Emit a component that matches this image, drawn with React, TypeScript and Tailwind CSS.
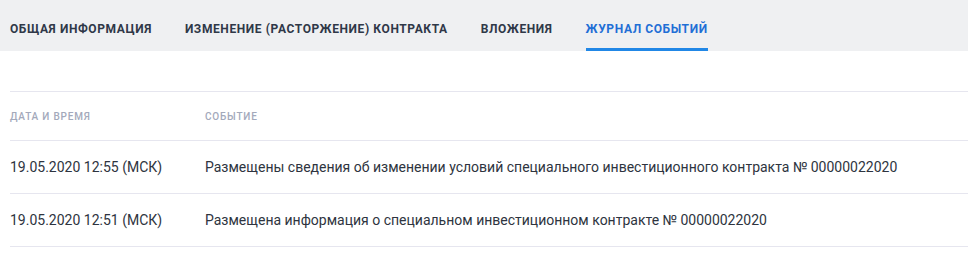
import React from "react"

const tabs = ["Общая информация", "Изменение (расторжение) контракта", "Вложения", "Журнал событий"]

const events = [
  {
    date: "19.05.2020 12:55 (МСК)",
    text: "Размещены сведения об изменении условий специального инвестиционного контракта № 00000022020",
  },
  {
    date: "19.05.2020 12:51 (МСК)",
    text: "Размещена информация о специальном инвестиционном контракте № 00000022020",
  },
]

const App: React.FC = () => {
  const active = 3

  return (
    <div className="min-h-screen bg-white" style={{ fontFamily: "Roboto, 'Noto Sans', sans-serif" }}>
      <div className="flex h-[51px] items-end gap-[33px] bg-[#eff0f2] px-[10px]">
        {tabs.map((tab, i) => (
          <div
            key={tab}
            className={
              i === active
                ? "flex h-[51px] items-center border-b-[3px] border-[#2187e6] pt-[10px] text-[12px] font-bold uppercase tracking-[0.6px] text-[#1f6fd6]"
                : "flex h-[51px] items-center border-b-[3px] border-transparent pt-[10px] text-[12px] font-bold uppercase tracking-[0.6px] text-[#2f3848]"
            }
          >
            {tab}
          </div>
        ))}
      </div>

      <div className="pl-[10px] pt-[40px]">
        <div className="flex h-[50px] items-center border-y border-[#e6e6ef] text-[10px] font-medium uppercase tracking-[0.8px] text-[#a3a9bb]">
          <div className="w-[195px]">Дата и время</div>
          <div>Событие</div>
        </div>
        {events.map((e) => (
          <div key={e.date} className="flex h-[53px] items-center border-b border-[#e6e6ef] text-[14px] text-[#2e3440]">
            <div className="w-[195px]">{e.date}</div>
            <div>{e.text}</div>
          </div>
        ))}
      </div>
    </div>
  )
}

export default App
